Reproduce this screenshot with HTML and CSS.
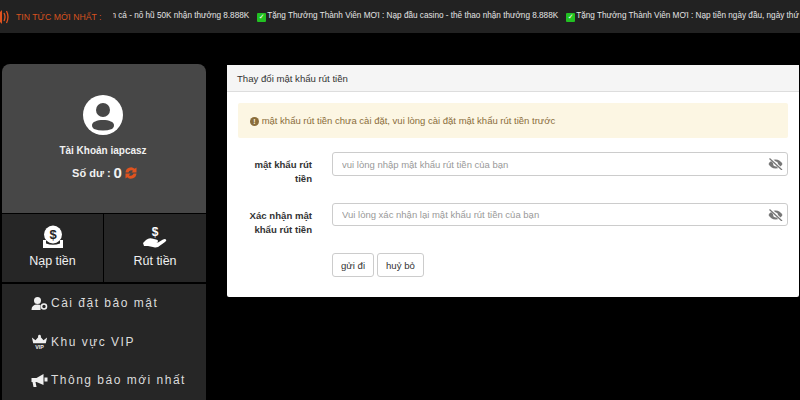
FILE: index.html
```html
<!DOCTYPE html>
<html lang="vi">
<head>
<meta charset="utf-8">
<title>Thay đổi mật khẩu rút tiền</title>
<link rel="stylesheet" href="styles.css">
</head>
<body>
<header class="news">
  <svg class="news-icon" width="10" height="18" viewBox="0 0 10 18"><path d="M0 5h2l3-3v14l-3-3H0z" fill="#e0531f" transform="translate(-3 0)"/><path d="M4 5q2 4 0 8M6.500 3q3 6 0 12" fill="none" stroke="#e0531f" stroke-width="1.300"/></svg>
  <span class="news-title">TIN TỨC MỚI NHẤT :</span>
  <div class="ticker">
    <div class="ticker-track">
      <span>Tặng Thưởng Thành Viên MỚI : Bắn cá - nổ hũ 50K nhận thưởng 8.888K</span>
      <span class="item"><i class="check">✓</i>Tặng Thưởng Thành Viên MỚI : Nạp đầu casino - thể thao nhận thưởng 8.888K</span>
      <span class="item"><i class="check">✓</i>Tặng Thưởng Thành Viên MỚI : Nạp tiền ngày đầu, ngày thứ hai</span>
    </div>
  </div>
</header>
<div class="page">
  <aside class="sidebar">
    <section class="profile">
      <svg class="avatar" width="40" height="40" viewBox="0 0 40 40"><circle cx="20" cy="20" r="20" fill="#fff"/><circle cx="20" cy="15" r="7" fill="#474747"/><path d="M9 30c0-3 5-5 11-5s11 2 11 5c0 2-1 3-2 4-3 1-6 1.500-9 1.500s-6-.5-9-1.500c-1-1-2-2-2-4z" fill="#474747"/></svg>
      <div class="account">Tài Khoản iapcasz</div>
      <div class="balance">Số dư : <b>0</b>
        <svg width="12" height="12" viewBox="0 0 12 12"><path d="M.5 5.500a5.500 5.500 0 0 1 9.200-3.700L11.500 .5v5h-5l1.600-1.800A3 3 0 0 0 3.500 5.500zM11.500 6.500a5.500 5.500 0 0 1-9.200 3.700L.5 11.500v-5h5L3.900 8.300A3 3 0 0 0 8.500 6.500z" fill="#e0531f"/></svg>
      </div>
    </section>
    <nav class="actions">
      <a class="action">
        <svg width="24" height="24" viewBox="0 0 24 24"><circle cx="12" cy="9.500" r="9" fill="#fff"/><text x="12" y="14" font-size="13" font-weight="700" text-anchor="middle" font-family="Liberation Sans" fill="#262626">$</text><path d="M2 15h3v3.500q7 2.500 14 0V15h3v8H2z" fill="#fff"/></svg>
        <span>Nạp tiền</span>
      </a>
      <a class="action">
        <svg width="24" height="24" viewBox="0 0 24 24"><text x="12" y="11" font-size="12" font-weight="700" text-anchor="middle" font-family="Liberation Sans" fill="#fff">$</text><path d="M0 18l3-3q3-2.500 6-1.500l4 1q2 0 2 1.500t-2 1.500h-3 5l5-3q2-1 3 0t-1 2.500L15 22q-2 .8-4 .3L5 21H1z" fill="#fff"/></svg>
        <span>Rút tiền</span>
      </a>
    </nav>
    <ul class="menu">
      <li>
        <svg width="17" height="13" viewBox="0 0 16 13"><circle cx="6" cy="3.500" r="3.500" fill="#f0f0f0"/><path d="M0 13q0-5.500 6-5.500 2 0 3 .6V13z" fill="#f0f0f0"/><circle cx="12.500" cy="9.500" r="2.500" fill="none" stroke="#f0f0f0" stroke-width="1.600"/></svg>
        Cài đặt bảo mật</li>
      <li>
        <svg width="17" height="16" viewBox="0 0 19 16"><path d="M1 3l4 3 4.500-5L14 6l4-3-1.500 6.500h-14z" fill="#f0f0f0"/><circle cx="9.500" cy="1.500" r="1.500" fill="#f0f0f0"/><text x="9.500" y="15.500" font-size="6" font-weight="700" text-anchor="middle" font-family="Liberation Sans" fill="#f0f0f0" letter-spacing="0">VIP</text></svg>
        Khu vực VIP</li>
      <li>
        <svg width="17" height="13" viewBox="0 0 16 13"><path d="M0 4h5l7-4v11L5 8H4l1 5H2L1 8H0z" fill="#f0f0f0"/><rect x="13" y="3.500" width="3" height="4" fill="#f0f0f0"/></svg>
        Thông báo mới nhất</li>
    </ul>
  </aside>
  <main class="panel">
    <div class="panel-head">Thay đổi mật khẩu rút tiền</div>
    <div class="panel-body">
      <div class="alert"><i class="alert-icon">!</i> mật khẩu rút tiền chưa cài đặt, vui lòng cài đặt mật khẩu rút tiền trước</div>
      <div class="row">
        <label class="label">mật khẩu rút tiền</label>
        <div class="field"><input type="text" placeholder="vui lòng nhập mật khẩu rút tiền của bạn">
          <svg class="eye" width="15" height="12" viewBox="0 0 15 12"><path d="M7.500 1.500c3 0 5.700 1.800 7 4.500-1.300 2.700-4 4.500-7 4.500S1.800 8.700.500 6c1.300-2.700 4-4.500 7-4.500z" fill="#777"/><circle cx="7.500" cy="6" r="2.400" fill="#fff"/><path d="M2 0l11.500 11.500" stroke="#fff" stroke-width="2.800"/><path d="M1.500 .5L14 12" stroke="#777" stroke-width="1.300"/></svg>
        </div>
      </div>
      <div class="row second">
        <label class="label">Xác nhận mật khẩu rút tiền</label>
        <div class="field"><input type="text" placeholder="Vui lòng xác nhận lại mật khẩu rút tiền của bạn">
          <svg class="eye" width="15" height="12" viewBox="0 0 15 12"><path d="M7.500 1.500c3 0 5.700 1.800 7 4.500-1.300 2.700-4 4.500-7 4.500S1.800 8.700.500 6c1.300-2.700 4-4.500 7-4.500z" fill="#777"/><circle cx="7.500" cy="6" r="2.400" fill="#fff"/><path d="M2 0l11.500 11.500" stroke="#fff" stroke-width="2.800"/><path d="M1.500 .5L14 12" stroke="#777" stroke-width="1.300"/></svg>
        </div>
      </div>
      <div class="buttons">
        <button type="button">gửi đi</button>
        <button type="button">huỷ bỏ</button>
      </div>
    </div>
  </main>
</div>
</body>
</html>
```
FILE: styles.css
```css
* { box-sizing: border-box; }
html, body { margin: 0; height: 400px; overflow: hidden; }
body { background: #000; font-family: "Liberation Sans", Arial, sans-serif; }

.news { display: flex; align-items: center; height: 33px; background: #222; overflow: hidden; }
.news-icon { flex: none; margin-right: 6px; }
.news-title { flex: none; width: 97px; color: #d9521f; font-size: 8.7px; white-space: nowrap; }
.ticker { flex: 1; overflow: hidden; min-width: 0; }
.ticker-track { display: flex; width: max-content; margin-left: -131px; color: #e4e4e4; font-size: 8.2px; white-space: nowrap; }
.item { margin-left: 8px; }
.check { display: inline-block; width: 9px; height: 9px; margin-right: 1px; background: #22c122; color: #fff; font: 700 7px/9px "DejaVu Sans", sans-serif; text-align: center; border-radius: 1px; vertical-align: -1px; }

.page { display: flex; align-items: flex-start; padding: 31px 1px 0 2px; gap: 21px; }
.sidebar { flex: none; width: 204px; }
.profile { height: 149px; background: #474747; border-radius: 8px 8px 0 0; display: flex; flex-direction: column; align-items: center; padding: 31px 2px 0 0; color: #f1f1f1; }
.avatar { display: block; }
.account { margin-top: 10px; font-size: 10px; font-weight: 700; }
.balance { margin-top: 7px; margin-left: 3px; font-size: 11px; font-weight: 700; display: flex; align-items: center; gap: 3px; line-height: 20px; }
.balance b { font-size: 15px; }

.actions { display: flex; gap: 1px; margin-top: 1px; border-bottom: 2px solid #000; }
.action { flex: 1; height: 68px; background: #262626; color: #f0f0f0; display: flex; flex-direction: column; align-items: center; padding-top: 11px; font-size: 12.5px; gap: 5px; }
.action:first-child { flex: none; width: 101px; }
.action svg { display: block; }

.menu { list-style: none; margin: 0; padding: 0 0 0 29px; background: #262626; height: 120px; }
.menu li { display: flex; align-items: center; gap: 3px; height: 38.5px; color: #dcdcdc; font-size: 12px; letter-spacing: 1.5px; white-space: nowrap; }

.panel { flex: 1; background: #fff; height: 232px; margin-top: 1px; border-radius: 2px; }
.panel-head { height: 27px; background: #f5f5f5; border-bottom: 1px solid #ddd; padding-left: 10px; font-size: 9.6px; line-height: 27px; color: #333; }
.panel-body { padding: 11px 11px 0 11px; }
.alert { height: 35px; background: #fcf6e3; border-radius: 2px; padding-left: 12px; line-height: 35px; color: #8a6d3b; font-size: 9.5px; }
.alert-icon { display: inline-block; width: 9px; height: 9px; border-radius: 50%; background: #8a6d3b; color: #fcf6e3; font: 700 7px/9px "Liberation Sans", sans-serif; text-align: center; }

.row { display: flex; margin-top: 14px; height: 38px; }
.second { margin-top: 13px; }
.label { flex: none; width: 68px; margin-left: 6px; margin-right: 20px; padding-top: 6px; text-align: right; color: #333; font-size: 9.6px; font-weight: 700; line-height: 14px; }
.field { flex: 1; height: 24px; position: relative; }
.second .field { height: 23px; }
.field input { display: block; width: 100%; height: 100%; padding: 0 9px; border: 1px solid #ccc; border-radius: 3px; background: #fff; font: 9.5px "Liberation Sans", sans-serif; color: #555; outline: none; }
.field input::placeholder { color: #999; opacity: 1; }
.eye { position: absolute; right: 5px; top: 6px; }

.buttons { display: flex; gap: 3px; margin-top: 12px; padding-left: 94px; }
.buttons button { height: 24px; padding: 0 8px; background: #fff; border: 1px solid #ccc; border-radius: 3px; font: 9.6px "Liberation Sans", sans-serif; color: #333; }
```
